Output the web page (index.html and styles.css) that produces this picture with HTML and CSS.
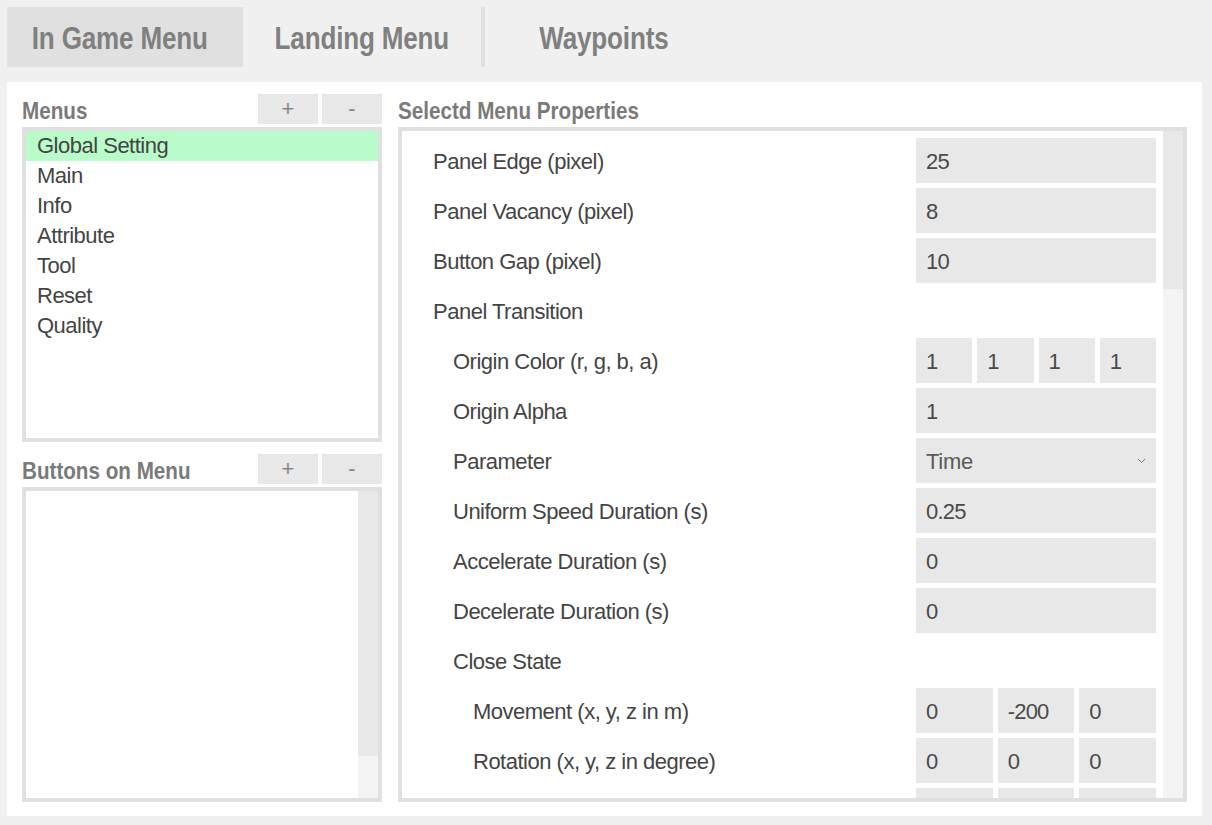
FILE: index.html
```html
<!DOCTYPE html>
<html>
<head>
<meta charset="utf-8">
<link rel="stylesheet" href="styles.css">
</head>
<body>
<div class="app">
  <nav class="tabs">
    <div class="tab tab-first active"><span class="tab-text">In Game Menu</span></div>
    <div class="tab"><span class="tab-text">Landing Menu</span></div>
    <div class="tab-sep"></div>
    <div class="tab"><span class="tab-text">Waypoints</span></div>
  </nav>
  <main class="panel">
    <section class="left">
      <div class="group">
        <div class="group-head">
          <h2 class="title">Menus</h2>
          <div class="btns"><button class="btn">+</button><button class="btn">-</button></div>
        </div>
        <div class="box">
          <ul class="list">
            <li class="item selected">Global Setting</li>
            <li class="item">Main</li>
            <li class="item">Info</li>
            <li class="item">Attribute</li>
            <li class="item">Tool</li>
            <li class="item">Reset</li>
            <li class="item">Quality</li>
          </ul>
        </div>
      </div>
      <div class="group">
        <div class="group-head">
          <h2 class="title">Buttons on Menu</h2>
          <div class="btns"><button class="btn">+</button><button class="btn">-</button></div>
        </div>
        <div class="box">
          <ul class="list"></ul>
          <div class="scrollbar"><div class="thumb thumb-buttons"></div></div>
        </div>
      </div>
    </section>
    <section class="right">
      <div class="group-head">
        <h2 class="title">Selectd Menu Properties</h2>
      </div>
      <div class="box box-props">
        <div class="props">
          <div class="row"><span class="label l0">Panel Edge (pixel)</span><div class="field"><span class="input">25</span></div></div>
          <div class="row"><span class="label l0">Panel Vacancy (pixel)</span><div class="field"><span class="input">8</span></div></div>
          <div class="row"><span class="label l0">Button Gap (pixel)</span><div class="field"><span class="input">10</span></div></div>
          <div class="row"><span class="label l0">Panel Transition</span><div class="field"></div></div>
          <div class="row"><span class="label l1">Origin Color (r, g, b, a)</span><div class="field"><span class="input">1</span><span class="input">1</span><span class="input">1</span><span class="input">1</span></div></div>
          <div class="row"><span class="label l1">Origin Alpha</span><div class="field"><span class="input">1</span></div></div>
          <div class="row"><span class="label l1">Parameter</span><div class="field"><span class="input select">Time<svg class="chev" width="9" height="6" viewBox="0 0 9 6"><polyline points="1,1 4.5,4.5 8,1" fill="none" stroke="#777" stroke-width="1"/></svg></span></div></div>
          <div class="row"><span class="label l1">Uniform Speed Duration (s)</span><div class="field"><span class="input">0.25</span></div></div>
          <div class="row"><span class="label l1">Accelerate Duration (s)</span><div class="field"><span class="input">0</span></div></div>
          <div class="row"><span class="label l1">Decelerate Duration (s)</span><div class="field"><span class="input">0</span></div></div>
          <div class="row"><span class="label l1">Close State</span><div class="field"></div></div>
          <div class="row"><span class="label l2">Movement (x, y, z in m)</span><div class="field"><span class="input">0</span><span class="input">-200</span><span class="input">0</span></div></div>
          <div class="row"><span class="label l2">Rotation (x, y, z in degree)</span><div class="field"><span class="input">0</span><span class="input">0</span><span class="input">0</span></div></div>
          <div class="row"><span class="label l2"></span><div class="field"><span class="input"></span><span class="input"></span><span class="input"></span></div></div>
        </div>
        <div class="scrollbar"><div class="thumb thumb-props"></div></div>
      </div>
    </section>
  </main>
</div>
</body>
</html>
```

FILE: styles.css
```css
* { box-sizing: border-box; }
body {
  margin: 0;
  background: #f0f0f0;
  font-family: "Liberation Sans", Arial, sans-serif;
  color: #444;
}
.app {
  height: 825px;
  padding: 7px 10px 9px 7px;
  display: flex;
  flex-direction: column;
}
.tabs {
  display: flex;
  height: 60px;
  flex: none;
}
.tab {
  width: 238px;
  display: flex;
  align-items: center;
  justify-content: center;
  padding-top: 3px;
  font-weight: bold;
  font-size: 31px;
  color: #808080;
}
.tab-text {
  display: inline-block;
  transform: scaleX(0.84);
  letter-spacing: -0.2px;
}
.tab-first { width: 236px; padding-right: 10px; }
.tab.active { background: #e0e0e0; }
.tab-sep { width: 4px; background: #e0e0e0; }
.panel {
  margin-top: 15px;
  flex: 1;
  min-height: 0;
  background: #fff;
  display: flex;
  gap: 16px;
  padding: 12px 15px 14px 15px;
}
.left {
  width: 360px;
  display: flex;
  flex-direction: column;
  gap: 12px;
}
.group {
  display: flex;
  flex-direction: column;
  gap: 3px;
}
.right {
  flex: 1;
  min-height: 0;
  display: flex;
  flex-direction: column;
  gap: 3px;
}
.group-head {
  height: 30px;
  flex: none;
  display: flex;
  justify-content: space-between;
  align-items: flex-end;
}
.title {
  margin: 0;
  font-size: 24px;
  line-height: 26px;
  font-weight: bold;
  color: #7a7a7a;
  transform: scaleX(0.86);
  transform-origin: left center;
  white-space: nowrap;
}
.btns {
  display: flex;
  gap: 4px;
  align-self: stretch;
}
.btn {
  width: 60px;
  height: 30px;
  border: 0;
  padding: 0;
  background: #e8e8e8;
  color: #888;
  font-family: inherit;
  font-size: 22px;
}
.box {
  height: 315px;
  border: 4px solid #e0e0e0;
  background: #fff;
  display: flex;
  overflow: hidden;
}
.box-props { flex: 1 1 0; height: auto; min-height: 0; }
.list {
  list-style: none;
  margin: 0;
  padding: 0;
  flex: 1;
}
.item {
  height: 30px;
  line-height: 30px;
  padding-left: 11px;
  font-size: 22px;
  letter-spacing: -0.5px;
  color: #444;
}
.item.selected { background: #b9fcc9; }
.scrollbar {
  width: 20px;
  background: #f3f3f3;
  flex: none;
}
.thumb { background: #e8e8e8; }
.thumb-buttons { height: 265px; }
.thumb-props { height: 158px; }
.props {
  flex: 1;
  padding: 7px 7px 0 31px;
  display: flex;
  flex-direction: column;
  gap: 5px;
}
.row {
  height: 45px;
  flex: none;
  display: flex;
  align-items: center;
}
.label {
  flex: 1;
  font-size: 22px;
  letter-spacing: -0.5px;
  color: #444;
  padding-top: 3px;
}
.l1 { padding-left: 20px; }
.l2 { padding-left: 40px; }
.field {
  width: 240px;
  height: 45px;
  display: flex;
  gap: 5px;
}
.input {
  flex: 1;
  background: #e8e8e8;
  padding-left: 10px;
  font-size: 22px;
  letter-spacing: -0.8px;
  line-height: 48px;
  color: #4a4a4a;
}
.select {
  display: flex;
  justify-content: space-between;
  align-items: center;
  line-height: normal;
  padding-top: 3px;
  padding-right: 10px;
  letter-spacing: -0.3px;
  color: #5a5a5a;
}
.chev { margin-top: -2px; }
```
